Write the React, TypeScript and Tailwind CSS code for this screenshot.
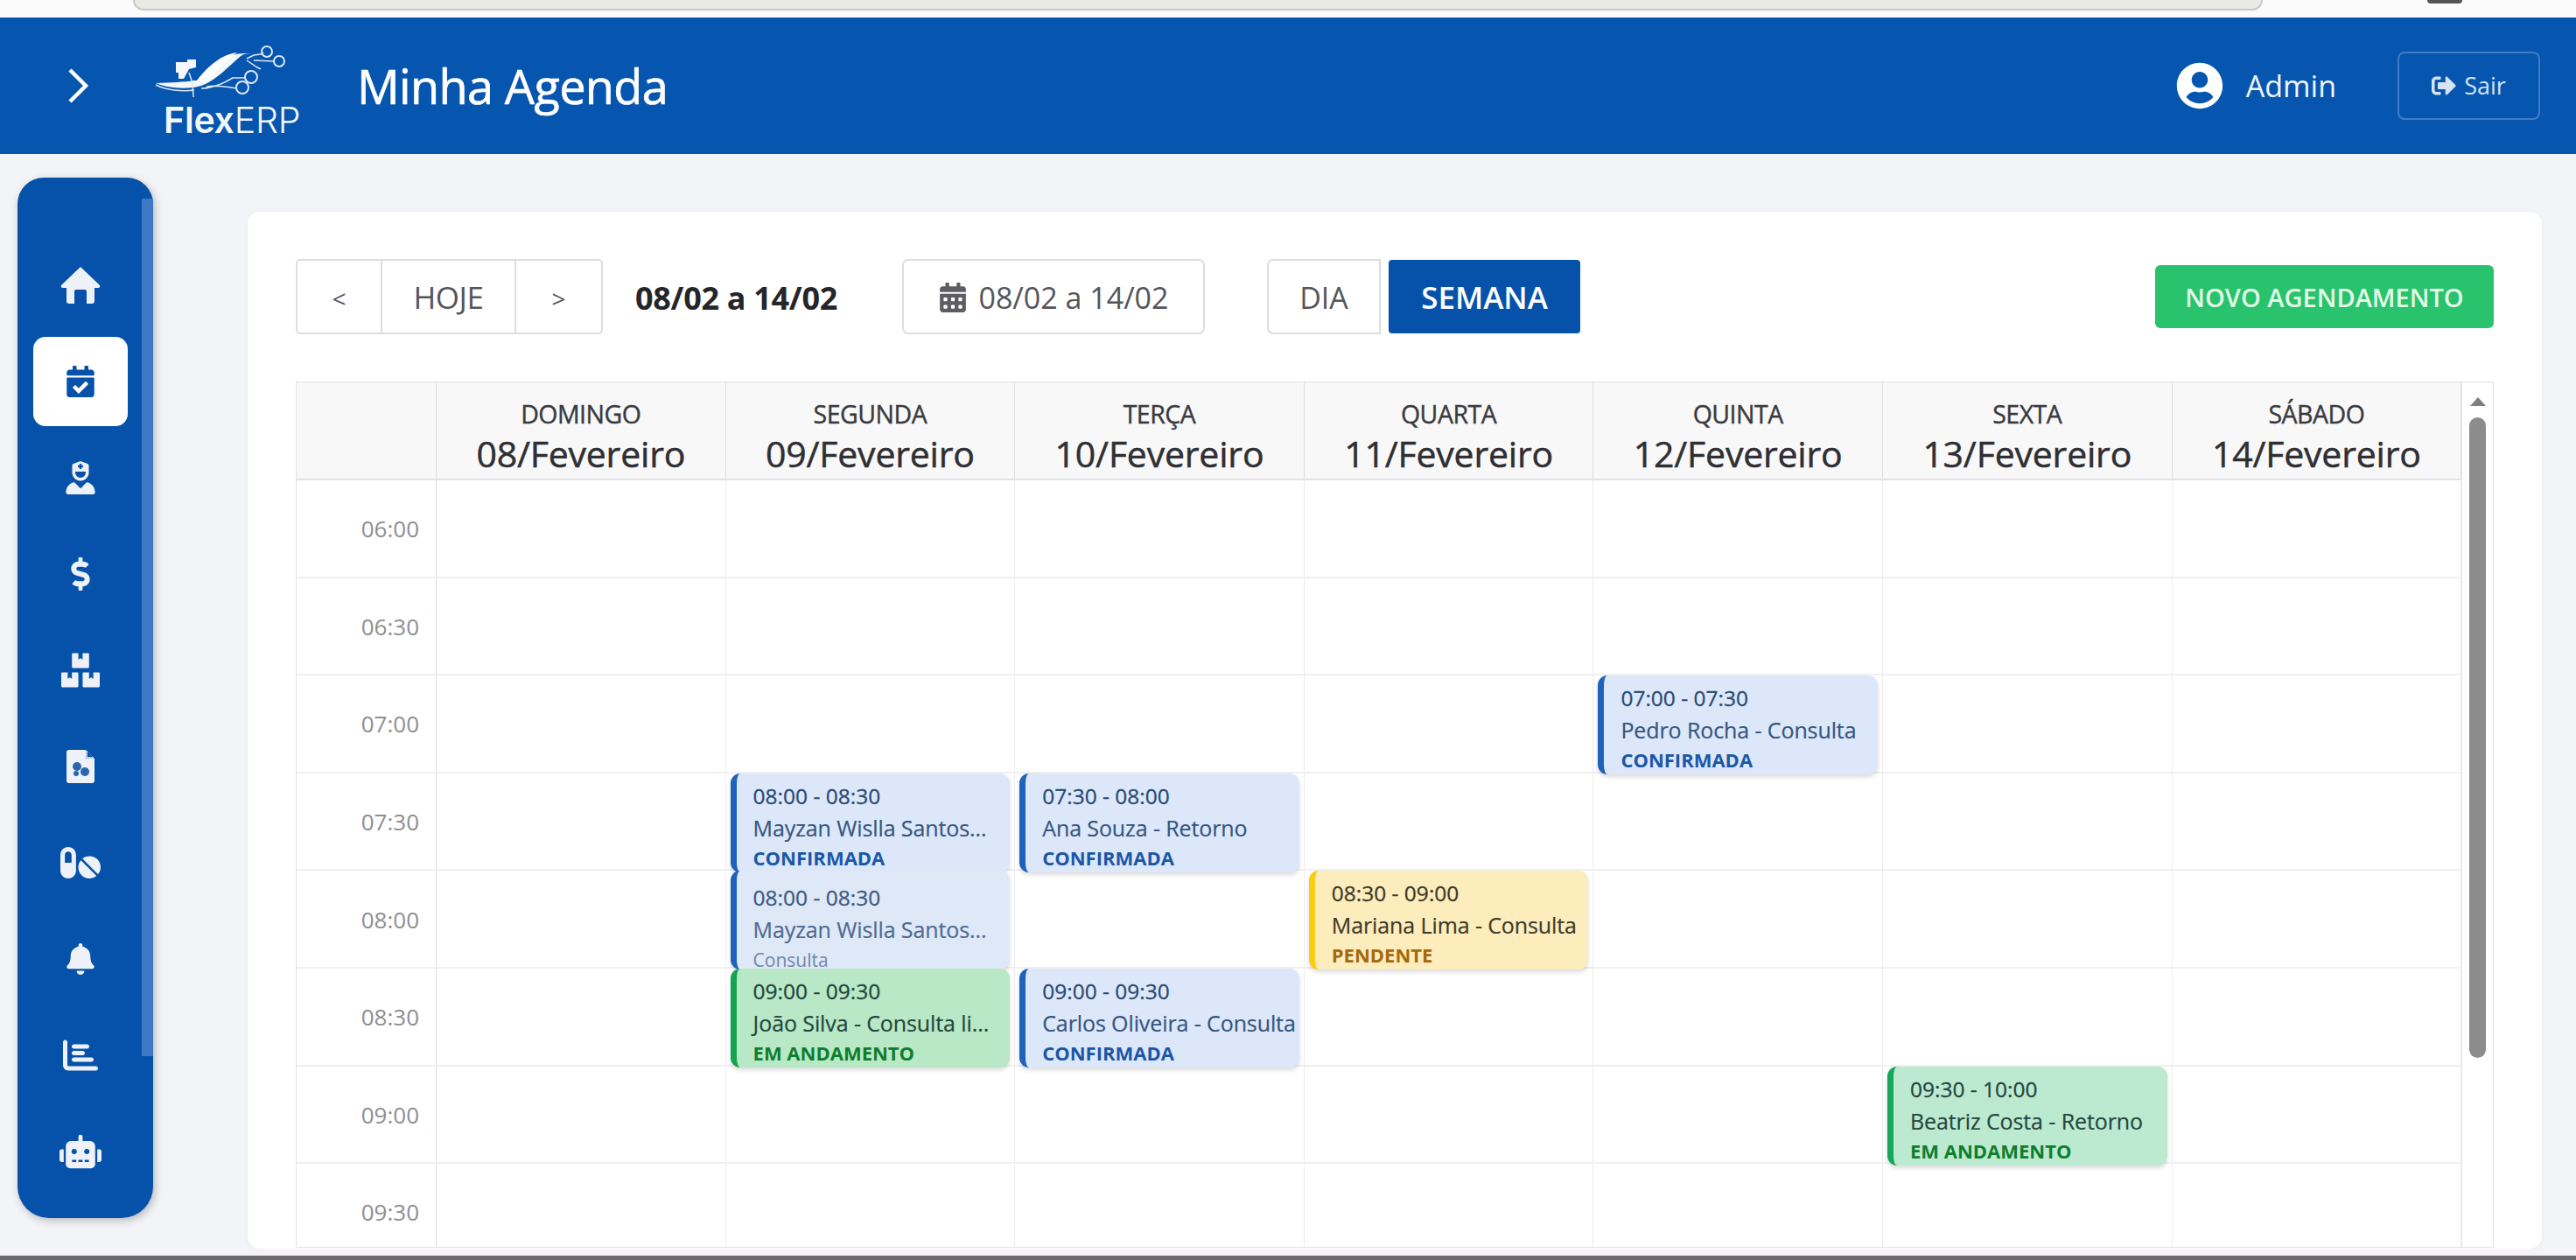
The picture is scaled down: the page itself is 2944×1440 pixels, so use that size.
import { FaBell, FaBoxes, FaCalendarAlt, FaCalendarCheck, FaDollarSign, FaPills, FaRobot, FaSignOutAlt, FaUserCircle } from "react-icons/fa";
import { FaChartBar, FaUserNurse } from "react-icons/fa6";

type Status = "blue" | "green" | "mint" | "yellow" | "faded";

interface EventItem {
  day: number;
  row: number;
  time: string;
  name: string;
  status: string;
  kind: Status;
}

const days = [
  ["DOMINGO", "08/Fevereiro"],
  ["SEGUNDA", "09/Fevereiro"],
  ["TERÇA", "10/Fevereiro"],
  ["QUARTA", "11/Fevereiro"],
  ["QUINTA", "12/Fevereiro"],
  ["SEXTA", "13/Fevereiro"],
  ["SÁBADO", "14/Fevereiro"],
];

const times = ["06:00", "06:30", "07:00", "07:30", "08:00", "08:30", "09:00", "09:30"];

const events: EventItem[] = [
  { day: 4, row: 2, time: "07:00 - 07:30", name: "Pedro Rocha - Consulta", status: "CONFIRMADA", kind: "blue" },
  { day: 1, row: 3, time: "08:00 - 08:30", name: "Mayzan Wislla Santos...", status: "CONFIRMADA", kind: "blue" },
  { day: 2, row: 3, time: "07:30 - 08:00", name: "Ana Souza - Retorno", status: "CONFIRMADA", kind: "blue" },
  { day: 1, row: 4, time: "08:00 - 08:30", name: "Mayzan Wislla Santos...", status: "Consulta", kind: "faded" },
  { day: 3, row: 4, time: "08:30 - 09:00", name: "Mariana Lima - Consulta", status: "PENDENTE", kind: "yellow" },
  { day: 1, row: 5, time: "09:00 - 09:30", name: "João Silva - Consulta li...", status: "EM ANDAMENTO", kind: "green" },
  { day: 2, row: 5, time: "09:00 - 09:30", name: "Carlos Oliveira - Consulta", status: "CONFIRMADA", kind: "blue" },
  { day: 5, row: 6, time: "09:30 - 10:00", name: "Beatriz Costa - Retorno", status: "EM ANDAMENTO", kind: "mint" },
];

const kindStyles: Record<Status, { box: string; time: string; name: string; status: string }> = {
  blue: {
    box: "bg-[#dce8f9] border-[#1f62bd] pt-[9px]",
    time: "text-[#2b4a73]",
    name: "text-[#35557f]",
    status: "text-[#1a57a8] font-bold text-[22px] leading-[30px]",
  },
  faded: {
    box: "bg-[#dfe8f7] border-[#1f62bd] pt-[14px]",
    time: "text-[#3e5a80]",
    name: "text-[#4d6a92]",
    status: "text-[#6f86a8] text-[21px] leading-[32px] font-normal",
  },
  green: {
    box: "bg-[#b8e8c6] border-[#16a34f] pt-[9px]",
    time: "text-[#24463a]",
    name: "text-[#24463a]",
    status: "text-[#0f7d2e] font-bold text-[22px] leading-[30px]",
  },
  mint: {
    box: "bg-[#bcead0] border-[#16a858] pt-[9px]",
    time: "text-[#24463f]",
    name: "text-[#24463f]",
    status: "text-[#0f7d2e] font-bold text-[22px] leading-[30px]",
  },
  yellow: {
    box: "bg-[#fdedbc] border-[#f8cd12] pt-[9px]",
    time: "text-[#3d3a28]",
    name: "text-[#3d3a28]",
    status: "text-[#a4680f] font-bold text-[22px] leading-[30px]",
  },
};

const HomeIcon = () => (
  <svg width="46" height="42" viewBox="0 0 46 42">
    <path d="M23 0L45 21q1 3-2 3h-4v15q0 3-3 3h-6V28q0-2-2-2h-10q-2 0-2 2v14h-6q-3 0-3-3V24H3q-3 0-2-3z" fill="#eef2f8" />
  </svg>
);

const FileIcon = () => (
  <svg width="32" height="38" viewBox="0 0 32 38">
    <path d="M3 0h19l10 10v25a3 3 0 0 1-3 3H3a3 3 0 0 1-3-3V3a3 3 0 0 1 3-3z" fill="#eef2f8" />
    <path d="M22 0v10h10z" fill="#0652ab" />
    <path d="M23 1v8h8" fill="none" stroke="#eef2f8" strokeWidth="1.5" />
    <circle cx="12" cy="19" r="5" fill="#2a66ad" />
    <circle cx="21" cy="25" r="5" fill="#2a66ad" />
    <circle cx="11" cy="27" r="3" fill="#2a66ad" />
  </svg>
);

const Logo = () => (
  <svg width="180" height="76" viewBox="0 0 180 76" fill="none">
    <path d="M34 26h10v-3h10v9l-8 2-6 11H34v-7h-3v-12z" fill="#f4f7fb" />
    <path d="M8 50c14 6 34 7 48 4 18-4 34-22 48-34 4-4 8-4 14-3-22-4-36 6-50 22-6 6-10 8-16 8-12 2-26 2-44 3z" fill="#f4f7fb" />
    <path d="M55 47c12-16 28-30 46-32-12 8-24 22-36 35z" fill="#ffffff" />
    <path d="M46 38l4 12 1 16" stroke="#dbe7f5" strokeWidth="1.5" />
    <path d="M8 52c12 6 30 8 44 6" stroke="#dbe7f5" strokeWidth="1.5" />
    <path d="M60 56c14 0 26-6 36-12h14M66 54c12-2 22 0 34 2M112 22l8-4 8-1 3-2M112 24l12 8 4 2M120 24l23 1" stroke="#dbe7f5" strokeWidth="1.5" />
    <circle cx="135" cy="14" r="6" stroke="#dbe7f5" strokeWidth="2" />
    <circle cx="149" cy="25" r="6" stroke="#dbe7f5" strokeWidth="2" />
    <circle cx="117" cy="43" r="7" stroke="#dbe7f5" strokeWidth="2" />
    <circle cx="107" cy="55" r="7" stroke="#dbe7f5" strokeWidth="2" />
  </svg>
);

const Sidebar = () => (
  <aside className="relative w-[155px] h-[1189px] bg-[#0652ab] rounded-t-[30px] rounded-b-[36px] shadow-[2px_3px_10px_rgba(0,0,0,0.25)] overflow-hidden shrink-0">
    <div className="absolute right-0 top-[24px] w-[13px] h-[980px] bg-[#3d78c6]" />
    <div className="flex flex-col items-center gap-[8px] pt-[72px] pr-[12px] text-[#eef2f8]">
      <div className="h-[102px] flex items-center justify-center"><HomeIcon /></div>
      <div className="w-[108px] h-[102px] rounded-[14px] bg-white text-[#0652ab] flex items-center justify-center"><FaCalendarCheck size={36} /></div>
      <div className="h-[102px] flex items-center justify-center"><FaUserNurse size={38} /></div>
      <div className="h-[102px] flex items-center justify-center"><FaDollarSign size={38} /></div>
      <div className="h-[102px] flex items-center justify-center"><FaBoxes size={44} /></div>
      <div className="h-[102px] flex items-center justify-center"><FileIcon /></div>
      <div className="h-[102px] flex items-center justify-center"><FaPills size={46} /></div>
      <div className="h-[102px] flex items-center justify-center"><FaBell size={36} /></div>
      <div className="h-[102px] flex items-center justify-center"><FaChartBar size={40} /></div>
      <div className="h-[102px] flex items-center justify-center"><FaRobot size={48} /></div>
    </div>
  </aside>
);

const EventCard = ({ item }: { item: EventItem }) => {
  const s = kindStyles[item.kind];
  return (
    <div className={`absolute left-[5px] right-[5px] top-[0px] h-[113px] z-10 rounded-[11px] border-l-[7px] overflow-hidden pl-[19px] whitespace-nowrap shadow-[0_3px_5px_rgba(0,0,0,0.14)] ${s.box}`}>
      <div className={`text-[24.5px] leading-[34px] [-webkit-text-stroke:0.3px_currentColor] ${s.time}`}>{item.time}</div>
      <div className={`text-[25px] leading-[38px] tracking-[-0.1px] [-webkit-text-stroke:0.2px_currentColor] ${s.name}`}>{item.name}</div>
      <div className={s.status}>{item.status}</div>
    </div>
  );
};

const Calendar = () => (
  <div className="flex border border-[#e2e3e6] h-[990px] overflow-hidden">
    <div className="w-[2474px] shrink-0">
      <div className="flex h-[112px] bg-[#f8f8f9] border-b-2 border-[#e3e3e5]">
        <div className="w-[160px] shrink-0 border-r border-[#dcdde0]" />
        {days.map(([name, date]) => (
          <div key={name} className="w-[330.6px] shrink-0 border-r border-[#dcdde0] flex flex-col items-center justify-center pt-[14px] text-[#2f2f33]">
            <span className="text-[28.5px] leading-[38px] tracking-[-0.5px] [-webkit-text-stroke:0.4px_currentColor] text-[#3a3a3e]">{name}</span>
            <span className="text-[41px] leading-[52px] tracking-[-0.2px] [-webkit-text-stroke:0.5px_currentColor]">{date}</span>
          </div>
        ))}
      </div>
      {times.map((time, row) => (
        <div key={time} className="flex h-[111.6px] border-b-2 border-[#f0f0f1]">
          <div className="w-[160px] shrink-0 border-r border-[#dcdde0] flex items-center justify-end pr-[19px] pt-[2px] text-[26px] text-[#8d8d92]">{time}</div>
          {days.map(([name], day) => {
            const item = events.find((e) => e.row === row && e.day === day);
            return (
              <div key={name} className="relative w-[330.6px] shrink-0 border-r border-[#ececee]">
                {item && <EventCard item={item} />}
              </div>
            );
          })}
        </div>
      ))}
    </div>
    <div className="flex-1 flex flex-col items-center pt-[17px] border-l border-[#e6e6e8]">
      <div className="w-0 h-0 border-x-[9px] border-x-transparent border-b-[10px] border-b-[#7e7e7e]" />
      <div className="mt-[13px] w-[19px] h-[732px] rounded-full bg-[#8c8c8c]" />
    </div>
  </div>
);

export default function App() {
  return (
    <div className="w-[2944px] h-[1440px] overflow-hidden flex flex-col bg-[#f3f4f8] font-['Open_Sans','Noto_Sans',sans-serif]">
      {/* browser strip */}
      <div className="h-[20px] bg-[#fbfbfb] shrink-0 flex justify-between">
        <div className="ml-[152px] w-[2434px] h-[12px] bg-[#e9e9e6] border-b-2 border-x-2 border-[#c9c9c7] rounded-b-[22px]" />
        <div className="mr-[130px] w-[40px] h-[4px] bg-[#555555] rounded-b-full" />
      </div>

      {/* header */}
      <header className="h-[156px] bg-[#0656b0] shrink-0 flex items-center text-white">
        <svg className="ml-[74px] w-[30px] h-[44px]" viewBox="0 0 30 44" fill="none">
          <path d="M6 4l18 18-18 18" stroke="white" strokeWidth="4.5" />
        </svg>
        <div className="ml-[66px] w-[180px] flex flex-col pt-[2px]">
          <Logo />
          <div className="font-['Inter',sans-serif] text-[41px] leading-[32px] pl-[17px] tracking-[-0.2px] text-[#f4f7fb] whitespace-nowrap">
            <span className="font-semibold">Flex</span>
            <span className="font-light">ERP</span>
          </div>
        </div>
        <h1 className="ml-[58px] text-[54px] leading-[70px] tracking-[-0.6px] [-webkit-text-stroke:0.7px_currentColor]">Minha Agenda</h1>
        <div className="ml-auto flex items-center">
          <FaUserCircle size={54} />
          <span className="ml-[26px] text-[34px] text-[#f0f4fa]">Admin</span>
          <button className="ml-[70px] mr-[41px] w-[163px] h-[78px] rounded-[8px] border-2 border-[#3f7cc6] flex items-center justify-center gap-[9px] text-[27px] text-[#d6e3f3]">
            <FaSignOutAlt size={28} />
            Sair
          </button>
        </div>
      </header>

      {/* body */}
      <div className="flex-1 flex items-start pl-[20px] pt-[27px] relative">
        <Sidebar />
        <main className="ml-[108px] mt-[39px] w-[2622px] h-[1185px] bg-white rounded-[14px] shadow-[0_1px_6px_rgba(0,0,0,0.05)] px-[55px] pt-[54px]">
          <div className="flex items-center h-[86px] mb-[54px]">
            <div className="flex h-[86px] w-[351px] border-2 border-[#dcdde1] rounded-[5px] text-[#55555a]">
              <div className="w-[95px] flex items-center justify-center pt-[3px] text-[28px]">&lt;</div>
              <div className="flex-1 flex items-center justify-center pt-[3px] text-[35px] tracking-[-0.5px] border-x-2 border-[#dcdde1]">HOJE</div>
              <div className="w-[97px] flex items-center justify-center pt-[3px] text-[28px]">&gt;</div>
            </div>
            <span className="ml-[37px] w-[305px] pt-[3px] text-[36px] tracking-[-0.3px] font-bold text-[#25252a]">08/02 a 14/02</span>
            <div className="w-[346px] h-[86px] border-2 border-[#dcdde1] rounded-[7px] flex items-center justify-center gap-[12px] pt-[2px] text-[34px] text-[#55555a]">
              <FaCalendarAlt size={34} className="text-[#5d5d62]" />
              08/02 a 14/02
            </div>
            <div className="ml-[71px] w-[130px] h-[86px] border-2 border-[#dcdde1] rounded-l-[7px] flex items-center justify-center pt-[3px] text-[34px] text-[#55555a]">DIA</div>
            <div className="ml-[9px] w-[219px] h-[84px] bg-[#0652ab] rounded-[4px] flex items-center justify-center pt-[3px] text-[35px] font-semibold text-white">SEMANA</div>
            <button className="ml-auto w-[387px] h-[72px] bg-[#28c36c] rounded-[6px] pt-[2px] text-[29px] font-semibold text-[#e4fbe9]">NOVO AGENDAMENTO</button>
          </div>
          <Calendar />
        </main>
      </div>

      {/* window edge */}
      <div className="absolute left-0 top-[1427px] w-[2944px] h-[8px] bg-[#f4f4f4]" />
      <div className="absolute left-0 top-[1435px] w-[2944px] h-[5px] bg-[#6d6a6d]" />
    </div>
  );
}
